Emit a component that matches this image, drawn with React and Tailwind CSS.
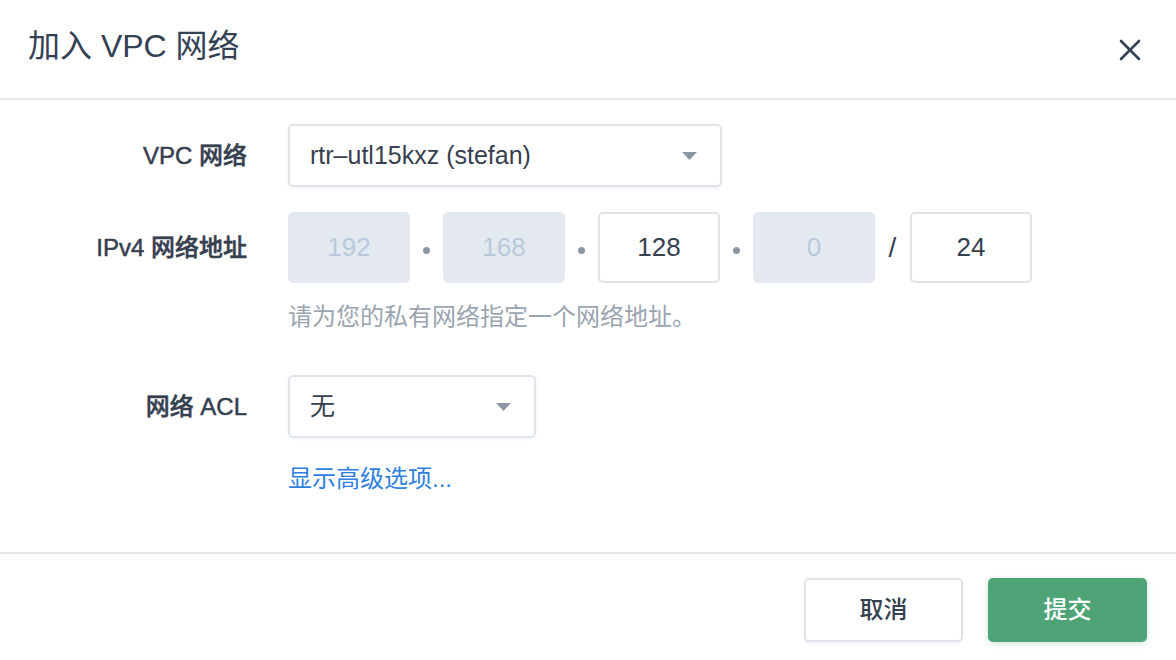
import React from 'react';

const font = { fontFamily: '"Liberation Sans", "Noto Sans CJK SC", sans-serif' };

const Caret = () => (
  <svg width="15" height="8" viewBox="0 0 15 8" className="shrink-0">
    <path d="M0 0 L15 0 L7.5 8 Z" fill="#8c96a4" />
  </svg>
);

const Select = ({ value, width }) => (
  <div
    className={`flex items-center justify-between h-[63px] pl-[20px] pr-[23px] bg-white border-2 border-[#dfe4eb] rounded-[5px] shadow-[0_1px_3px_rgba(40,60,90,0.08)] ${width}`}
  >
    <span className="text-[25px] text-[#36404f]">{value}</span>
    <Caret />
  </div>
);

const IpBox = ({ value, disabled }) =>
  disabled ? (
    <div className="w-[122px] h-[71px] flex items-center justify-center rounded-[5px] bg-[#e4e9f0] text-[26px] text-[#b9c9dc]">
      {value}
    </div>
  ) : (
    <div className="w-[122px] h-[71px] flex items-center justify-center rounded-[5px] bg-white border-2 border-[#dfe4eb] text-[26px] text-[#36404f]">
      {value}
    </div>
  );

const Dot = () => (
  <div className="w-[33px] flex justify-center pt-[6px]">
    <div className="w-[7px] h-[7px] rounded-full bg-[#8c96a4]"></div>
  </div>
);

const Label = ({ children }) => (
  <div className="w-[248px] shrink-0 text-right pr-[1px] text-[24px] font-medium text-[#36404f] [-webkit-text-stroke:0.5px_#36404f]">
    {children}
  </div>
);

const App = () => {
  return (
    <div className="w-[1176px] h-[660px] bg-white overflow-hidden" style={font}>
      <div className="h-[100px] border-b-2 border-[#e4e8ee] flex items-start justify-between pl-[28px] pr-[34px] pt-[25px]">
        <h1 className="text-[32px] leading-[42px] text-[#344154] font-normal">加入 VPC 网络</h1>
        <svg width="24" height="24" viewBox="0 0 24 24" className="mt-[13px]">
          <path d="M3 3 L21 21 M21 3 L3 21" stroke="#344154" strokeWidth="2.6" strokeLinecap="round" />
        </svg>
      </div>

      <div className="h-[452px] pt-[24px]">
        <div className="flex items-center">
          <Label>VPC 网络</Label>
          <div className="ml-[40px]">
            <Select value="rtr–utl15kxz (stefan)" width="w-[434px]" />
          </div>
        </div>

        <div className="flex items-start mt-[25px]">
          <div className="pt-[18px]">
            <Label>IPv4 网络地址</Label>
          </div>
          <div className="ml-[40px]">
            <div className="flex items-center">
              <IpBox value="192" disabled />
              <Dot />
              <IpBox value="168" disabled />
              <Dot />
              <IpBox value="128" />
              <Dot />
              <IpBox value="0" disabled />
              <div className="w-[35px] text-center text-[28px] text-[#36404f]">/</div>
              <IpBox value="24" />
            </div>
            <p className="mt-[16px] text-[24px] leading-[36px] text-[#9aa4b1]">请为您的私有网络指定一个网络地址。</p>
          </div>
        </div>

        <div className="flex items-center mt-[40px]">
          <Label>网络 ACL</Label>
          <div className="ml-[40px]">
            <Select value="无" width="w-[248px]" />
          </div>
        </div>

        <div className="ml-[288px] mt-[23px]">
          <a className="text-[24px] leading-[36px] text-[#2f7fe0]">显示高级选项...</a>
        </div>
      </div>

      <div className="border-t-2 border-[#e4e8ee] flex justify-end gap-[25px] pr-[29px] pt-[24px]">
        <button className="w-[159px] h-[64px] rounded-[5px] bg-white border-2 border-[#dfe4eb] shadow-[0_1px_3px_rgba(40,60,90,0.08)] text-[24px] font-medium text-[#36404f]">
          取消
        </button>
        <button className="w-[159px] h-[64px] rounded-[5px] bg-[#4ea477] shadow-[0_2px_6px_rgba(78,164,119,0.25)] text-[24px] font-medium text-white">
          提交
        </button>
      </div>
    </div>
  );
};

export default App;
